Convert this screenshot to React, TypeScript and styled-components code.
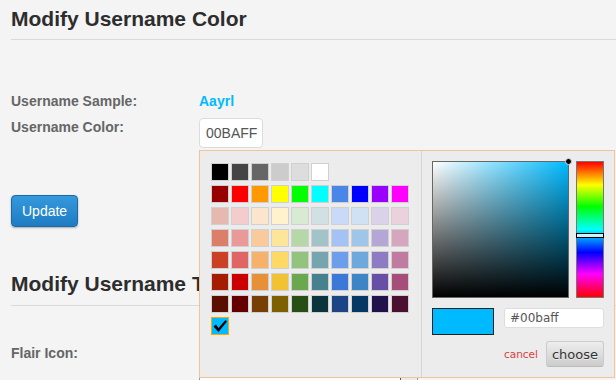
import React from 'react';
import styled, { createGlobalStyle } from 'styled-components';

const GlobalStyle = createGlobalStyle`
  html, body {
    margin: 0;
    padding: 0;
    overflow: hidden;
    background-color: #f4f4f4;
    font-family: "Liberation Sans", Arial, sans-serif;
  }
`;

const Page = styled.div`
  width: 616px;
  height: 380px;
  padding-left: 11px;
  box-sizing: border-box;
  overflow: hidden;
`;

const Title = styled.h2`
  margin: 7px 0 0;
  padding-bottom: 8px;
  border-bottom: 1px solid #dadada;
  font-size: 21px;
  line-height: 24px;
  font-weight: bold;
  color: #2d2d2d;
  white-space: nowrap;
`;

const SecondTitle = styled(Title)`
  margin-top: 45px;
  padding-bottom: 9px;
`;

const FieldRow = styled.div<{ $top: number }>`
  display: flex;
  align-items: flex-start;
  margin-top: ${(p) => p.$top}px;
  font-size: 14px;
  line-height: 18px;
`;

const FieldLabel = styled.div`
  width: 188px;
  flex-shrink: 0;
  font-weight: bold;
  color: #666;
`;

const SampleName = styled.span`
  font-weight: bold;
  color: #00baff;
`;

const ColorField = styled.div`
  position: relative;
`;

const HexInput = styled.div`
  width: 64px;
  height: 30px;
  box-sizing: border-box;
  padding: 0 6px;
  border: 1px solid #dcdcdc;
  border-radius: 4px;
  background: #fff;
  color: #555;
  font-size: 14px;
  line-height: 28px;
`;

const UpdateButton = styled.button`
  display: block;
  margin-top: 47px;
  padding: 6px 10px;
  border: 1px solid #1b6aa6;
  border-radius: 4px;
  background: linear-gradient(to bottom, #3599dc, #1e7cc2);
  box-shadow: 0 1px 2px rgba(0, 0, 0, 0.3);
  color: #fff;
  font-family: "Liberation Sans", Arial, sans-serif;
  font-size: 14px;
  line-height: 18px;
`;

const FlairBox = styled.div`
  position: relative;
  width: 219px;
  height: 44px;
  box-sizing: border-box;
  border: 1px solid #999;
  background: #fbfbfb;

  &::after {
    content: '';
    position: absolute;
    top: 0;
    bottom: 0;
    right: 0;
    width: 16px;
    border-left: 1px solid #555;
    background: #ececec;
  }
`;

/* spectrum-like colour picker */

const Popup = styled.div`
  position: absolute;
  top: calc(100% + 2px);
  left: 0;
  z-index: 10;
  display: flex;
  border: 1px solid #f0c49b;
  background-color: #ececec;
`;

const PaletteContainer = styled.div`
  width: 201px;
  padding: 10px;
  border-right: 1px solid #d6d6d6;
`;

const PaletteRow = styled.div`
  display: flex;
  height: 22px;
`;

const Swatch = styled.span<{ $color: string; $active?: boolean }>`
  display: flex;
  align-items: center;
  justify-content: center;
  width: 16px;
  height: 16px;
  margin: 2px 1px;
  border: 1px solid ${(p) => (p.$active ? 'orange' : '#d0d0d0')};
  background-color: ${(p) => p.$color};
`;

const PickerContainer = styled.div`
  width: 172px;
  padding: 10px;
`;

const PickerTop = styled.div`
  display: flex;
  gap: 7px;
  height: 137px;
`;

const SatVal = styled.div<{ $hue: string }>`
  position: relative;
  width: 137px;
  height: 137px;
  box-sizing: border-box;
  border: 1px solid #666;
  background-color: ${(p) => p.$hue};
  background-image: linear-gradient(to top, #000, rgba(0, 0, 0, 0)),
    linear-gradient(to right, #fff, rgba(255, 255, 255, 0));
`;

const Dragger = styled.span`
  position: absolute;
  top: -4px;
  right: -4px;
  width: 5px;
  height: 5px;
  border: 1px solid #ddd;
  border-radius: 50%;
  background: #000;
`;

const HueBar = styled.div`
  position: relative;
  width: 28px;
  height: 137px;
  box-sizing: border-box;
  border: 1px solid #777;
  background: linear-gradient(
    to bottom,
    #ff0000 0%,
    #ffff00 17%,
    #00ff00 33%,
    #00ffff 50%,
    #0000ff 67%,
    #ff00ff 83%,
    #ff0000 100%
  );
`;

const HueHandle = styled.span`
  position: absolute;
  left: -1px;
  right: -1px;
  height: 3px;
  border: 1px solid #000;
  background: rgba(255, 255, 255, 0.8);
`;

const InputRow = styled.div`
  display: flex;
  align-items: flex-start;
  gap: 10px;
  margin-top: 10px;
`;

const Preview = styled.div<{ $color: string }>`
  width: 62px;
  height: 27px;
  box-sizing: border-box;
  border: 1px solid #222;
  background-color: ${(p) => p.$color};
`;

const PickerInput = styled.div`
  width: 100px;
  height: 20px;
  box-sizing: border-box;
  padding: 0 5px;
  border: 1px solid #dedede;
  border-radius: 3px;
  background: #fff;
  color: #555;
  font-family: "DejaVu Sans", Verdana, sans-serif;
  font-size: 12px;
  line-height: 18px;
`;

const ButtonRow = styled.div`
  display: flex;
  align-items: center;
  justify-content: flex-end;
  gap: 8px;
  margin-top: 6px;
`;

const CancelLink = styled.a`
  color: #d93f3f;
  font-family: "DejaVu Sans", Verdana, sans-serif;
  font-size: 10.5px;
  text-decoration: none;
`;

const ChooseButton = styled.button`
  width: 58px;
  height: 26px;
  padding: 0;
  border: 1px solid #ccc;
  border-bottom-color: #bbb;
  border-radius: 3px;
  background: linear-gradient(to bottom, #eee, #ccc);
  color: #333;
  text-shadow: 0 1px 0 #eee;
  font-family: "DejaVu Sans", Verdana, sans-serif;
  font-size: 13px;
  line-height: 1;
`;

const palette: string[][] = [
  ['#000000', '#444444', '#666666', '#cccccc', '#dddddd', '#ffffff'],
  ['#980000', '#ff0000', '#ff9900', '#ffff00', '#00ff00', '#00ffff', '#4a86e8', '#0000ff', '#9900ff', '#ff00ff'],
  ['#e6b8af', '#f4cccc', '#fce5cd', '#fff2cc', '#d9ead3', '#d0e0e3', '#c9daf8', '#cfe2f3', '#d9d2e9', '#ead1dc'],
  ['#dd7e6b', '#ea9999', '#f9cb9c', '#ffe599', '#b6d7a8', '#a2c4c9', '#a4c2f4', '#9fc5e8', '#b4a7d6', '#d5a6bd'],
  ['#cc4125', '#e06666', '#f6b26b', '#ffd966', '#93c47d', '#76a5af', '#6d9eeb', '#6fa8dc', '#8e7cc3', '#c27ba0'],
  ['#a61c00', '#cc0000', '#e69138', '#f1c232', '#6aa84f', '#45818e', '#3c78d8', '#3d85c6', '#674ea7', '#a64d79'],
  ['#5b0f00', '#660000', '#783f04', '#7f6000', '#274e13', '#0c343d', '#1c4587', '#073763', '#20124d', '#4c1130'],
];

const CheckMark = () => (
  <svg width="16" height="16" viewBox="0 0 16 16">
    <path d="M1.5 8.5 L4 6.5 L6.5 10 L13.5 2 L15 3.5 L6.5 14 Z" fill="#000" />
  </svg>
);

const selected = '#00baff';
const hueDeg = 196;

export default function App() {
  // hue handle offset within the 135px inner slider
  const hueTop = Math.round((hueDeg / 360) * 135) - 3;

  return (
    <>
      <GlobalStyle />
      <Page>
        <Title>Modify Username Color</Title>

        <FieldRow $top={52}>
          <FieldLabel>Username Sample:</FieldLabel>
          <SampleName>Aayrl</SampleName>
        </FieldRow>

        <FieldRow $top={8}>
          <FieldLabel>Username Color:</FieldLabel>
          <ColorField>
            <HexInput>00BAFF</HexInput>
            <Popup>
              <PaletteContainer>
                {palette.map((row, i) => (
                  <PaletteRow key={i}>
                    {row.map((c) => (
                      <Swatch key={c} $color={c} />
                    ))}
                  </PaletteRow>
                ))}
                <PaletteRow>
                  <Swatch $color={selected} $active>
                    <CheckMark />
                  </Swatch>
                </PaletteRow>
              </PaletteContainer>

              <PickerContainer>
                <PickerTop>
                  <SatVal $hue="#00bbff">
                    <Dragger />
                  </SatVal>
                  <HueBar>
                    <HueHandle style={{ top: hueTop }} />
                  </HueBar>
                </PickerTop>
                <InputRow>
                  <Preview $color={selected} />
                  <PickerInput>#00baff</PickerInput>
                </InputRow>
                <ButtonRow>
                  <CancelLink href="#">cancel</CancelLink>
                  <ChooseButton>choose</ChooseButton>
                </ButtonRow>
              </PickerContainer>
            </Popup>
          </ColorField>
        </FieldRow>

        <UpdateButton>Update</UpdateButton>

        <SecondTitle>Modify Username Title</SecondTitle>

        <FieldRow $top={38}>
          <FieldLabel>Flair Icon:</FieldLabel>
          <FlairBox />
        </FieldRow>
      </Page>
    </>
  );
}
